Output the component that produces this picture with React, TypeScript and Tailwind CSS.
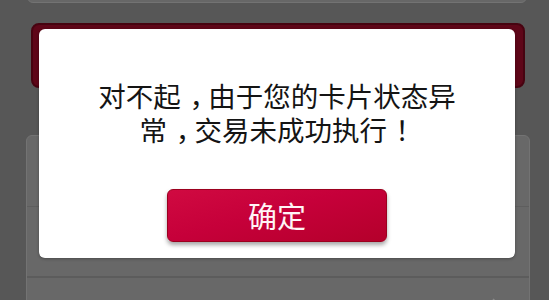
export default function App() {
  return (
    <div className="relative h-[300px] w-[549px] overflow-hidden bg-[#575757] font-['Noto_Sans_CJK_SC',sans-serif]">
      {/* page behind the overlay */}
      <div className="flex flex-col">
        <div className="-mt-[17px] ml-[27px] h-[20px] w-[500px] rounded-b-md border border-[#737373] bg-[#676767]" />
        <div className="ml-[31px] mt-[20px] h-[65px] w-[494px] rounded-lg border-2 border-[#470310] bg-[#5e0618]" />
        <div className="ml-[26px] mt-[47px] flex w-[504px] flex-col rounded-t-md border border-[#737373] bg-[#686868]">
          <div className="h-[71px] border-b border-[#5e5e5e]" />
          <div className="h-[71px] border-b-2 border-[#5c5c5c]" />
          <div className="flex h-[40px] items-start justify-end pr-[30px] pt-[20px]">
            <svg width="8" height="10" viewBox="0 0 8 10" fill="none" stroke="#8a8a8a" strokeWidth="1.5">
              <path d="M2 1l4 4-4 4" />
            </svg>
          </div>
        </div>
      </div>

      {/* dialog */}
      <div className="absolute left-[39px] top-[29px] flex h-[229px] w-[476px] flex-col items-center rounded-md bg-white shadow-[0_1px_3px_rgba(0,0,0,0.3)]">
        <p className="mt-[49px] w-[372px] text-center text-[27.5px] leading-[34px] text-[#141414]">
          对不起<span className="inline-block translate-x-[0.32em]">，</span>由于您的卡片状态异常<span className="inline-block translate-x-[0.32em]">，</span>交易未成功执行<span className="inline-block translate-x-[0.3em]">！</span>
        </p>
        <button className="mt-[43px] flex h-[53px] w-[220px] items-center justify-center rounded-md border border-[#9c001e] bg-[linear-gradient(165deg,#d00a41_0%,#c6003a_45%,#b4002b_100%)] text-[29px] leading-none text-[#fff4f6] shadow-[0_3px_4px_rgba(0,0,0,0.35)]">
          确定
        </button>
      </div>
    </div>
  );
}
